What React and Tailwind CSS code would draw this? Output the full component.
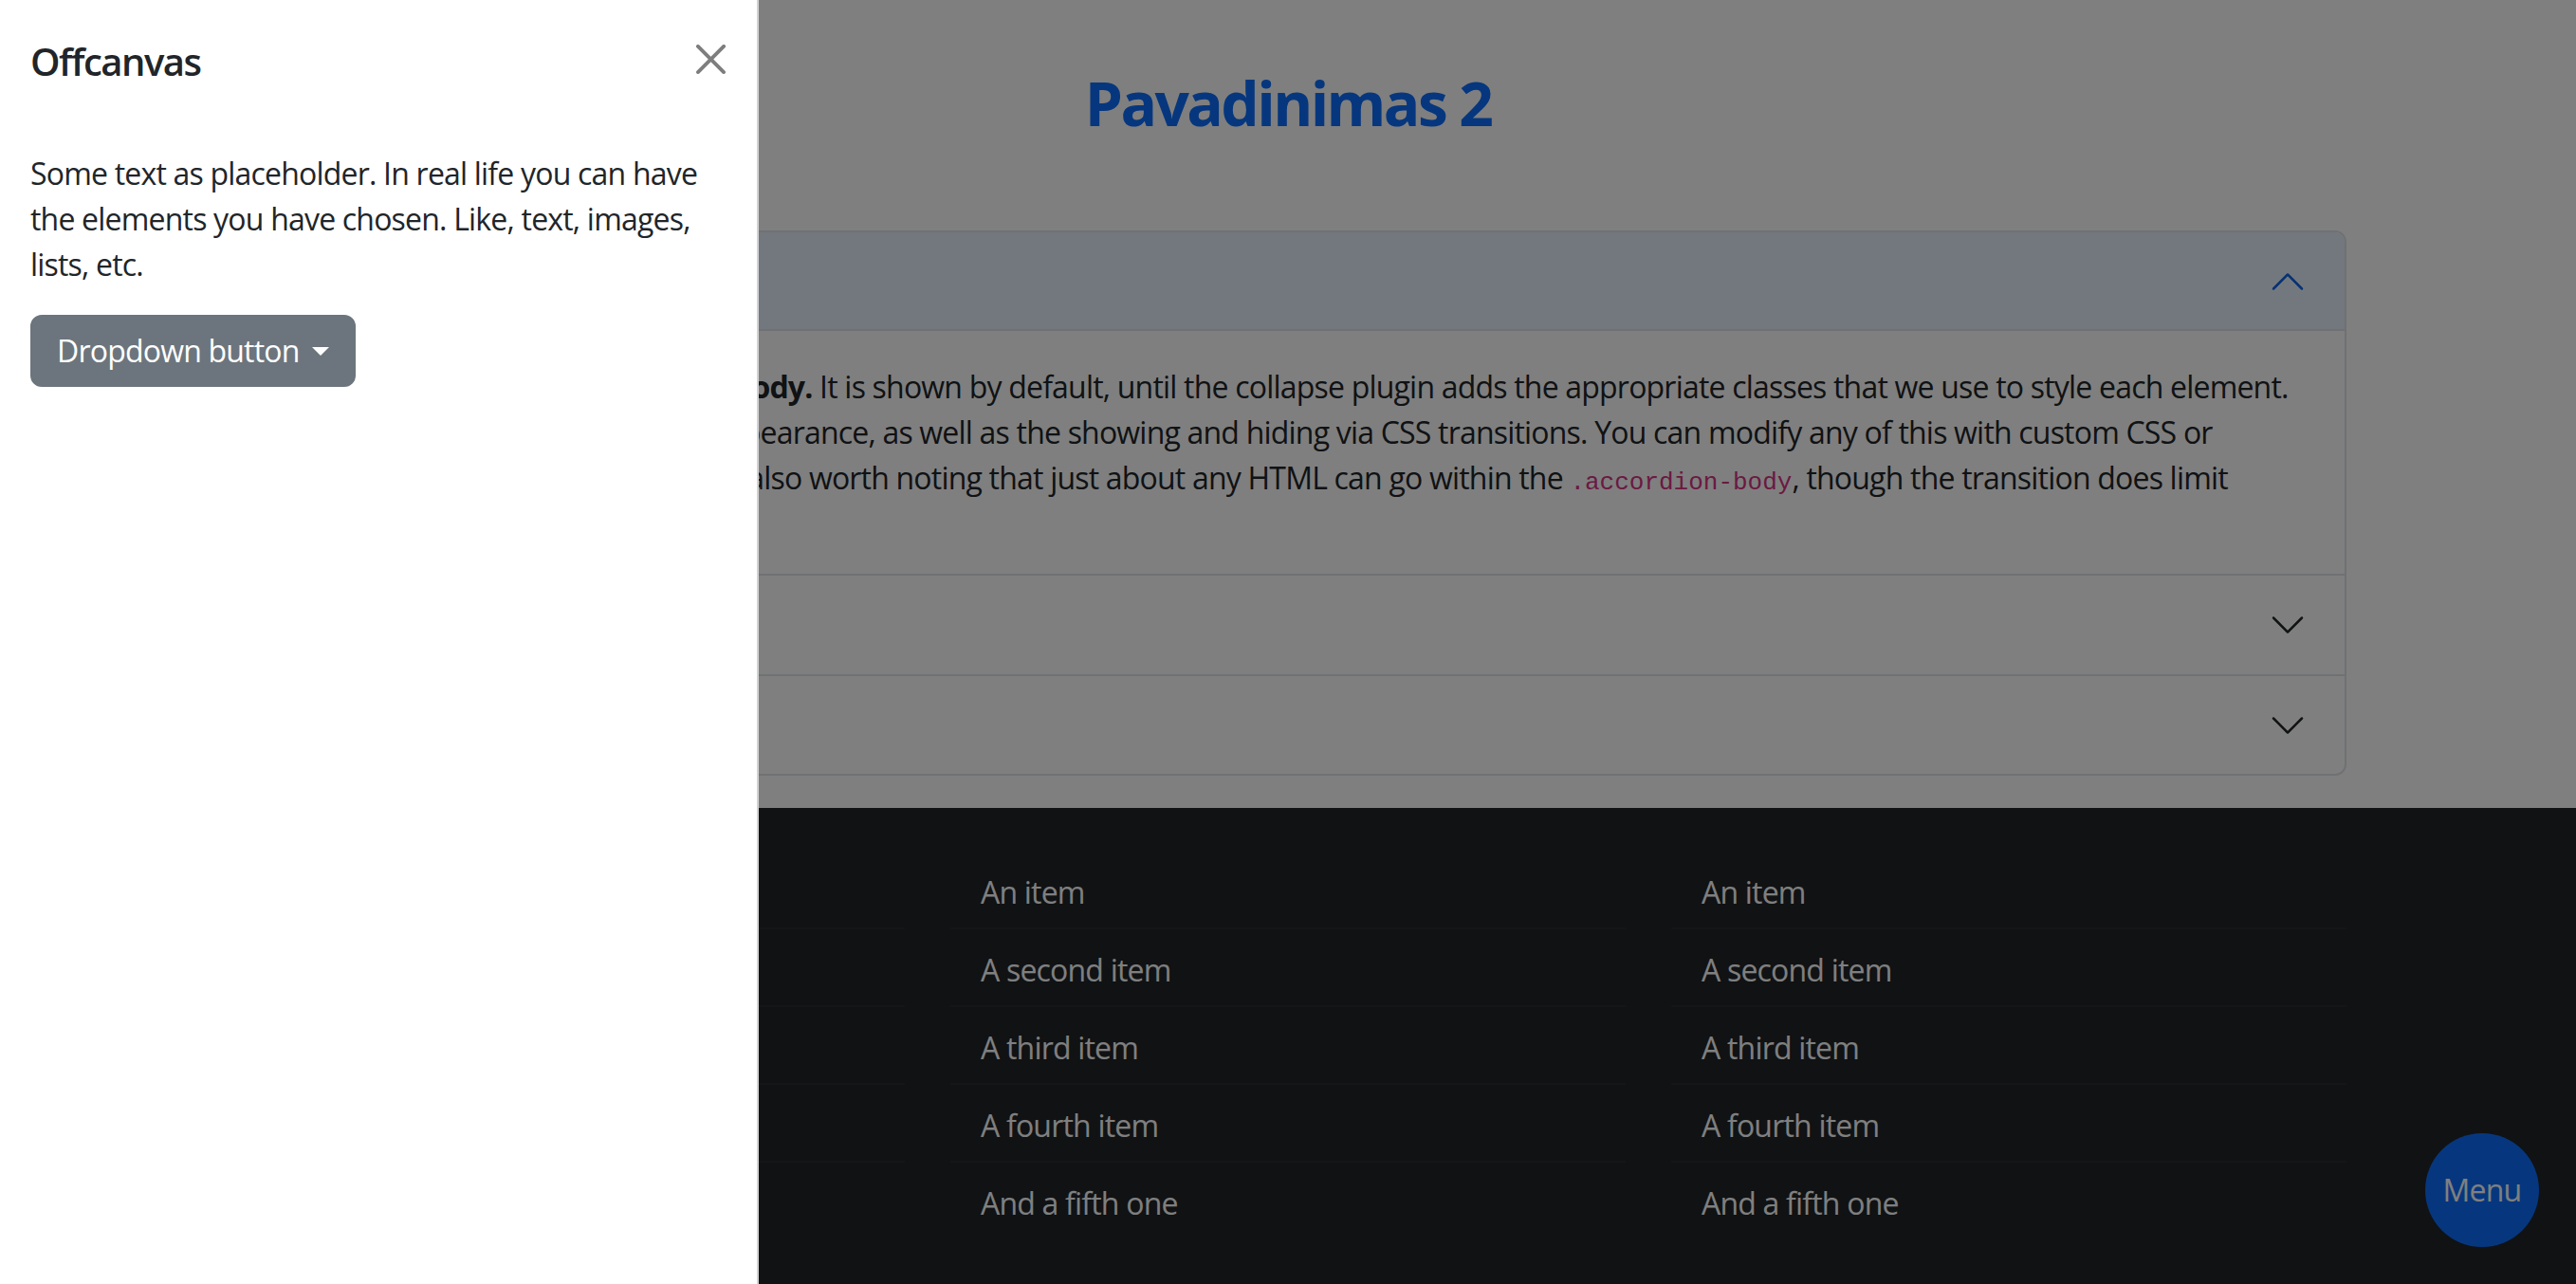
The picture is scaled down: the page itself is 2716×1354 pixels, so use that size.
const items = ["An item", "A second item", "A third item", "A fourth item", "And a fifth one"];

function Chevron({ up, color }) {
    return (
        <svg viewBox="0 0 16 16" width="40" height="40" fill={color} className={up ? "rotate-180" : ""}>
            <path fillRule="evenodd" d="M1.646 4.646a.5.5 0 0 1 .708 0L8 10.293l5.646-5.647a.5.5 0 0 1 .708.708l-6 6a.5.5 0 0 1-.708 0l-6-6a.5.5 0 0 1 0-.708z" />
        </svg>
    );
}

function FooterList() {
    return (
        <ul className="flex flex-col">
            {items.map((item, i) => (
                <li
                    key={item}
                    className={"px-[32px] pt-[19px] pb-[13px] leading-[48px] text-white " + (i < items.length - 1 ? "border-b-2 border-[#282c31]" : "")}
                >
                    {item}
                </li>
            ))}
        </ul>
    );
}

export default function App() {
    return (
        <div className="relative h-[1354px] overflow-hidden bg-white font-['Open_Sans',sans-serif] text-[32px] leading-[48px] tracking-[-0.8px] text-[#212529]">
            {/* page behind the offcanvas */}
            <main className="pt-[70px]">
                <h2 className="text-center text-[64px] leading-[77px] font-bold text-[#0d6efd] tracking-[-2.6px]">Pavadinimas 2</h2>

                <div className="w-[2232px] mx-auto mt-[96px] border-2 border-[#dee2e6] rounded-[12px] overflow-hidden">
                    <button className="w-full h-[104px] px-[40px] flex items-center justify-between bg-[#e7f1ff] text-[#0c63e4] shadow-[inset_0_-2px_0_#dee2e6]">
                        <span>Accordion Item #1</span>
                        <Chevron up color="#0c63e4" />
                    </button>
                    <div className="h-[258px] px-[40px] pt-[35px] pb-[29px] whitespace-nowrap border-b-2 border-[#dee2e6]">
                        <strong>This is the first item's accordion body.</strong> It is shown by default, until the collapse plugin adds the appropriate classes that we use to style each element.<br />
                        These classes control the overall appearance, as well as the showing and hiding via CSS transitions. You can modify any of this with custom CSS or<br />
                        overriding our default variables. It's also worth noting that just about any HTML can go within the <code className="font-['Liberation_Mono',monospace] text-[26px] leading-none tracking-normal text-[#d63384]">.accordion-body</code>, though the transition does limit<br />
                        overflow.
                    </div>
                    <button className="w-full h-[106px] px-[40px] flex items-center justify-between border-b-2 border-[#dee2e6]">
                        <span>Accordion Item #2</span>
                        <Chevron color="#212529" />
                    </button>
                    <button className="w-full h-[103px] px-[40px] flex items-center justify-between">
                        <span>Accordion Item #3</span>
                        <Chevron color="#212529" />
                    </button>
                </div>

                <footer className="mt-[34px] bg-[#212529] pt-[46px] pb-[48px]">
                    <div className="w-[2280px] mx-auto grid grid-cols-3">
                        <div className="px-[24px]"><FooterList /></div>
                        <div className="px-[24px]"><FooterList /></div>
                        <div className="px-[24px]"><FooterList /></div>
                    </div>
                </footer>
            </main>

            <button className="fixed right-[39px] bottom-[39px] z-10 w-[120px] h-[120px] rounded-full bg-[#0d6efd] text-white text-[32px]">
                Menu
            </button>

            {/* backdrop */}
            <div className="fixed inset-0 z-20 bg-black/50"></div>

            {/* offcanvas */}
            <div className="fixed left-0 top-0 z-30 h-full w-[800px] bg-white border-r-2 border-black/[0.175]">
                <div className="flex items-start justify-between pl-[32px] pr-[32px] pt-[41px]">
                    <h5 className="text-[40px] leading-[48px] font-semibold tracking-[-1.5px]">Offcanvas</h5>
                    <svg viewBox="0 0 16 16" width="31" height="31" fill="#000" className="opacity-50 mt-[6px] mr-[1px]">
                        <path d="M.293.293a1 1 0 0 1 1.414 0L8 6.586 14.293.293a1 1 0 1 1 1.414 1.414L9.414 8l6.293 6.293a1 1 0 0 1-1.414 1.414L8 9.414l-6.293 6.293a1 1 0 0 1-1.414-1.414L6.586 8 .293 1.707a1 1 0 0 1 0-1.414z" />
                    </svg>
                </div>
                <div className="px-[32px] pt-[70px]">
                    <p className="whitespace-nowrap">
                        Some text as placeholder. In real life you can have<br />
                        the elements you have chosen. Like, text, images,<br />
                        lists, etc.
                    </p>
                    <button className="mt-[29px] h-[76px] px-[26px] flex items-center bg-[#6c757d] border-2 border-[#6c757d] rounded-[12px] text-white">
                        Dropdown button
                        <span className="ml-[13px] w-0 h-0 border-t-[9px] border-t-white border-x-[9px] border-x-transparent"></span>
                    </button>
                </div>
            </div>
        </div>
    );
}
